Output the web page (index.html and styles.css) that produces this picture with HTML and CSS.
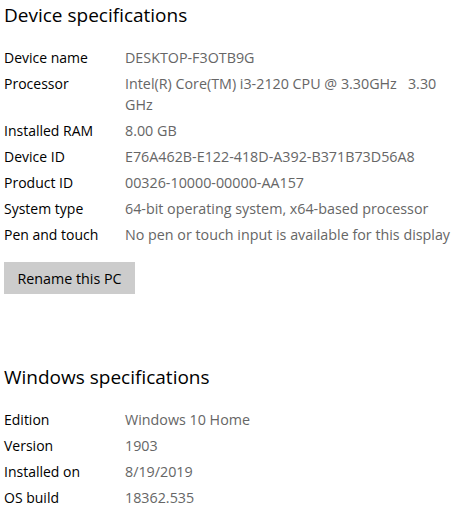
FILE: index.html
```html
<!DOCTYPE html>
<html>
<head>
<meta charset="utf-8">
<link rel="stylesheet" href="styles.css">
</head>
<body>
<div class="page">
  <section class="section">
    <h2 class="title">Device specifications</h2>
    <div class="specs">
      <div class="row"><div class="label">Device name</div><div class="value">DESKTOP-F3OTB9G</div></div>
      <div class="row"><div class="label">Processor</div><div class="value">Intel(R) Core(TM) i3-2120 CPU @ 3.30GHz&nbsp;&nbsp;&nbsp;3.30 GHz</div></div>
      <div class="row"><div class="label">Installed RAM</div><div class="value">8.00 GB</div></div>
      <div class="row"><div class="label">Device ID</div><div class="value">E76A462B-E122-418D-A392-B371B73D56A8</div></div>
      <div class="row"><div class="label">Product ID</div><div class="value">00326-10000-00000-AA157</div></div>
      <div class="row"><div class="label">System type</div><div class="value">64-bit operating system, x64-based processor</div></div>
      <div class="row"><div class="label">Pen and touch</div><div class="value">No pen or touch input is available for this display</div></div>
    </div>
    <button class="btn">Rename this PC</button>
  </section>
  <section class="section section-win">
    <h2 class="title">Windows specifications</h2>
    <div class="specs">
      <div class="row"><div class="label">Edition</div><div class="value">Windows 10 Home</div></div>
      <div class="row"><div class="label">Version</div><div class="value">1903</div></div>
      <div class="row"><div class="label">Installed on</div><div class="value">8/19/2019</div></div>
      <div class="row"><div class="label">OS build</div><div class="value">18362.535</div></div>
    </div>
  </section>
</div>
</body>
</html>
```
FILE: styles.css
```css
html, body {
  margin: 0;
  padding: 0;
  background: #ffffff;
}
body {
  font-family: "Open Sans", "Noto Sans", sans-serif;
  color: #000;
}
.page {
  padding: 0 4px;
}
.title {
  margin: 0;
  font-weight: 400;
  font-size: 19px;
  line-height: 30px;
  color: #000;
}
.specs {
  margin-top: 17px;
  display: flex;
  flex-direction: column;
}
.row {
  display: grid;
  grid-template-columns: 121px 1fr;
  font-size: 14px;
  line-height: 21px;
  padding-bottom: 5px;
}
.label {
  color: #000;
}
.value {
  color: #666;
  font-size: 14.3px;
  padding-right: 6px;
}
.btn {
  margin-top: 12px;
  width: 131px;
  height: 32px;
  border: none;
  background: #cccccc;
  font-family: inherit;
  font-size: 14.3px;
  color: #000;
  padding: 0;
}
.section-win {
  margin-top: 68px;
}
```
